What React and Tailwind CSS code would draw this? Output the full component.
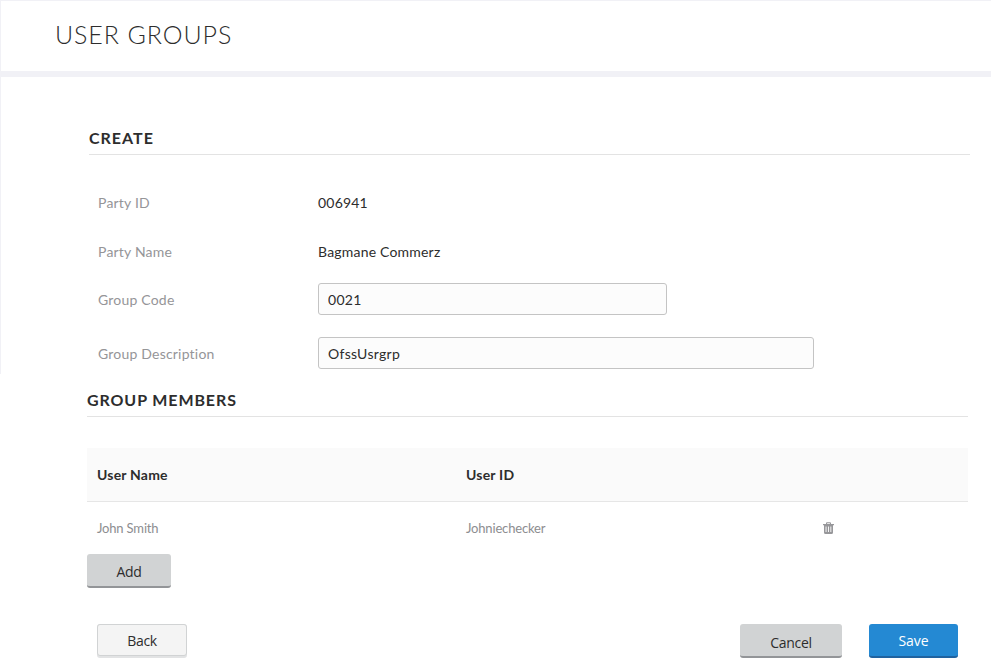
const Field = ({ label, children, className }) => (
  <div className={`flex items-center text-[14px] tracking-[0.2px] ${className}`}>
    <label className="w-[220px] shrink-0 text-[#959598]">{label}</label>
    {children}
  </div>
);

const Trash = () => (
  <svg width="11" height="12" viewBox="0 0 11 12" fill="#97979a">
    <path d="M0 2H3V1.3Q3 0.3 4 0.3H7Q8 0.3 8 1.3V2H11V3.3H0ZM4.1 1.3V2H6.9V1.3Z" fillRule="evenodd" />
    <path d="M1 3H10V10.5Q10 12 8.5 12H2.5Q1 12 1 10.5ZM2.6 4.5V10H3.5V4.5ZM5 4.5V10H5.9V4.5ZM7.4 4.5V10H8.3V4.5Z" fillRule="evenodd" />
  </svg>
);

export default function App() {
  return (
    <div className="h-[670px] w-[991px] overflow-hidden bg-white font-['Lato',sans-serif] text-[#2d2d2d]">
      <header className="h-[77px] border-b-[6px] border-l border-t border-[#f1f1f6] pl-[54px] pt-[14px]">
        <h1 className="text-[25px] font-light leading-[38px] tracking-[0.9px]">USER GROUPS</h1>
      </header>
      <section className="h-[297px] border-l border-[#f1f1f6] pl-[88px] pr-[21px] pt-[50px]">
        <h2 className="h-[28px] border-b border-[#e3e3e3] text-[16px] font-bold leading-[22px] tracking-[1px]">CREATE</h2>
        <div className="pl-[9px]">
          <Field label="Party ID" className="mt-[35px] h-[24px]"><span>006941</span></Field>
          <Field label="Party Name" className="mt-[25px] h-[24px]"><span>Bagmane Commerz</span></Field>
          <Field label="Group Code" className="mt-[20px] h-[32px]">
            <input defaultValue="0021" className="h-[32px] w-[349px] rounded-[3px] border border-[#c4c4c4] bg-[#fcfcfc] px-[9px] tracking-[0.3px]" />
          </Field>
          <Field label="Group Description" className="mt-[22px] h-[32px]">
            <input defaultValue="OfssUsrgrp" className="h-[32px] w-[496px] rounded-[3px] border border-[#c4c4c4] bg-[#fcfcfc] px-[9px] tracking-[0.3px]" />
          </Field>
        </div>
      </section>
      <section className="pl-[87px] pr-[23px] pt-[15px]">
        <h2 className="h-[28px] border-b border-[#e3e3e3] text-[16px] font-bold leading-[22px] tracking-[0.9px]">GROUP MEMBERS</h2>
        <div className="mt-[31px] grid h-[54px] grid-cols-[369px_1fr] items-center border-b border-[#e6e6e6] bg-[#fafafa] pl-[10px] text-[14px] font-bold tracking-[0.2px]">
          <span>User Name</span><span>User ID</span>
        </div>
        <div className="grid h-[52px] grid-cols-[369px_357px_1fr] items-center pl-[10px] text-[13px] tracking-[-0.17px] text-[#8d8d90]">
          <span className="pt-[2px]">John Smith</span><span className="pt-[2px]">Johniechecker</span><Trash />
        </div>
        <button className="block h-[34px] w-[84px] rounded-[3px] border-b-2 border-[#939598] bg-[#d1d3d4] pt-[2px] font-['Open_Sans',sans-serif] text-[14px] tracking-[-0.3px]">Add</button>
      </section>
      <footer className="mt-[36px] flex pl-[97px] font-['Open_Sans',sans-serif] text-[14px] tracking-[-0.3px]">
        <div className="h-[34px] w-[90px] rounded-[3px] bg-[#e2e3e4]">
          <button className="h-[32px] w-full rounded-[3px] border border-[#d1d3d4] bg-[#f4f4f4] pt-px">Back</button>
        </div>
        <button className="ml-[553px] h-[34px] w-[102px] rounded-[3px] border-b-2 border-[#939598] bg-[#d1d3d4] pt-[4px]">Cancel</button>
        <button className="ml-[27px] h-[34px] w-[89px] rounded-[3px] border-b-2 border-[#2063a0] bg-[#2489d3] tracking-[-0.1px] text-white">Save</button>
      </footer>
    </div>
  );
}
